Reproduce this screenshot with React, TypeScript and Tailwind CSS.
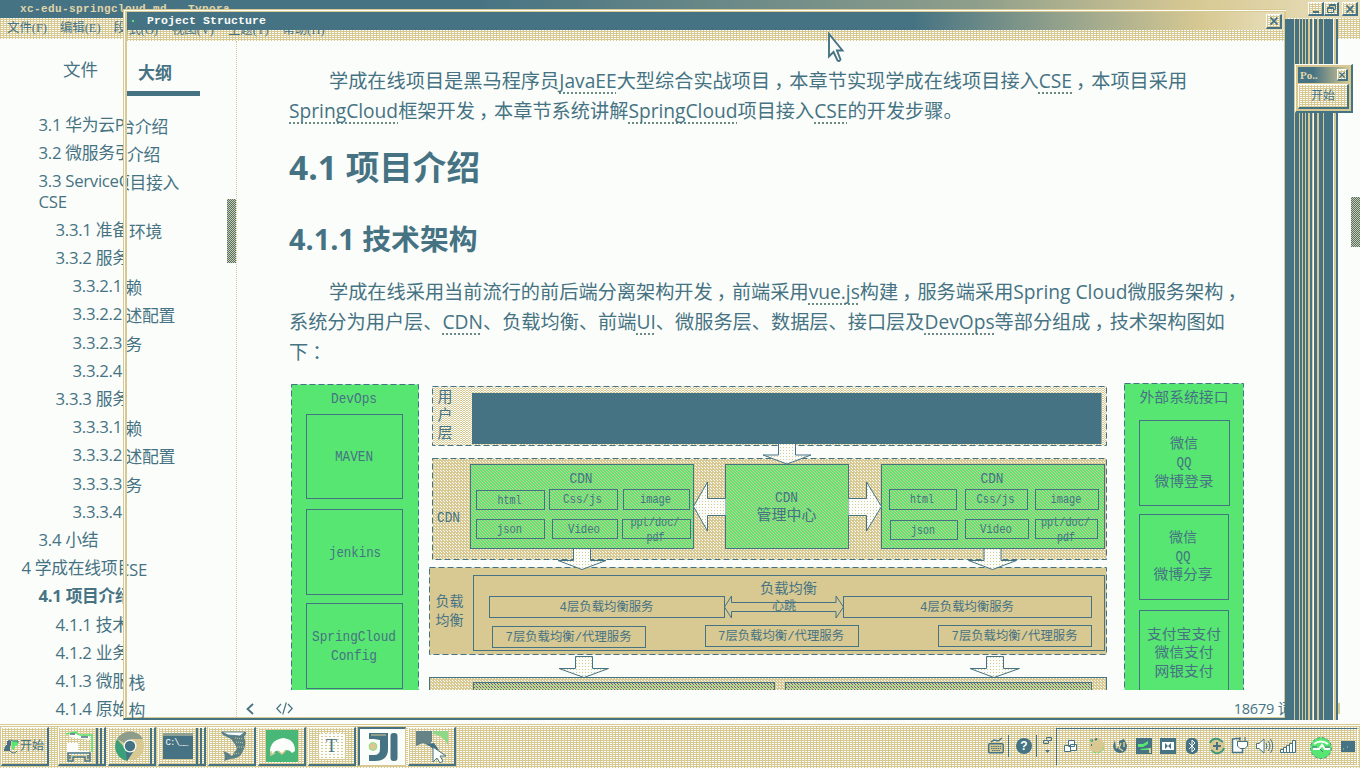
import React from "react";

const TEAL = "#467383";
const TAN = "#d8c993";
const GREEN = "#57e672";

const dither =
  "bg-[#d8c993] bg-[conic-gradient(#fbfdfa_25%,transparent_0)] bg-[length:3px_2px]";
const scrollDither =
  "bg-[#d8c993] bg-[conic-gradient(#467383_25%,transparent_0_50%,#467383_0_75%,transparent_0)] bg-[length:2px_2px]";
const sans = "font-['Open_Sans','Noto_Sans_CJK_SC',sans-serif]";
const serif = "font-['Liberation_Serif','Noto_Sans_CJK_SC',serif]";
const raised =
  "border-t border-l border-b-2 border-r-2 border-t-[#fbfdfa] border-l-[#fbfdfa] border-b-[#467383] border-r-[#467383]";

const outline = [
  ["pl-[38px]", "3.1 华为云PaaS平台"],
  ["pl-[38px]", "3.2 微服务引擎CSE"],
  ["pl-[38px]", "3.3 ServiceComb项"],
  ["pl-[55px]", "3.3.1 准备开发"],
  ["pl-[55px]", "3.3.2 服务提供者"],
  ["pl-[72px]", "3.3.2.1"],
  ["pl-[72px]", "3.3.2.2"],
  ["pl-[72px]", "3.3.2.3"],
  ["pl-[72px]", "3.3.2.4"],
  ["pl-[55px]", "3.3.3 服务消费者"],
  ["pl-[72px]", "3.3.3.1"],
  ["pl-[72px]", "3.3.3.2"],
  ["pl-[72px]", "3.3.3.3"],
  ["pl-[72px]", "3.3.3.4"],
  ["pl-[38px]", "3.4 小结"],
  ["pl-[21px]", "4 学成在线项目接入"],
  ["pl-[38px] font-bold", "4.1 项目介绍"],
  ["pl-[55px]", "4.1.1 技术架构"],
  ["pl-[55px]", "4.1.2 业务流程"],
  ["pl-[55px]", "4.1.3 微服务技术"],
  ["pl-[55px]", "4.1.4 原始架构"],
];

const tails = [
  ["w-[41px]", "台介绍"],
  ["w-[33px]", "介绍"],
  ["w-[52px]", "项目接入"],
  ["w-[35px]", "环境"],
  ["w-[10px]", ""],
  ["w-[15px]", "赖"],
  ["w-[48px]", "述配置"],
  ["w-[15px]", "务"],
  ["w-[10px]", ""],
  ["w-[10px]", ""],
  ["w-[15px]", "赖"],
  ["w-[48px]", "述配置"],
  ["w-[15px]", "务"],
  ["w-[10px]", ""],
  ["w-[10px]", ""],
  ["w-[20px]", "CSE"],
  ["w-[10px]", ""],
  ["w-[10px]", ""],
  ["w-[10px]", ""],
  ["w-[18px]", "栈"],
  ["w-[18px]", "构"],
];

function U({ children }: { children: React.ReactNode }) {
  return (
    <span className="underline decoration-dotted decoration-[#6c8a86] decoration-[1.5px] underline-offset-[4px] [text-decoration-skip-ink:none]">
      {children}
    </span>
  );
}

function Mark({ children }: { children: string }) {
  return <span className="pl-[4px] mr-[-4px]">{children}</span>;
}

function CloseGlyph({ size = 8 }: { size?: number }) {
  return (
    <svg width={size} height={size} viewBox="0 0 8 8" stroke={TEAL} strokeWidth="1.8">
      <path d="M.5 .5L7.5 7.5M7.5 .5L.5 7.5" />
    </svg>
  );
}

type BoxProps = { x: number; y: number; x2: number; y2: number; fill?: string; dash?: boolean };
function Box({ x, y, x2, y2, fill = "none", dash }: BoxProps) {
  return (
    <rect
      x={x}
      y={y}
      width={x2 - x}
      height={y2 - y}
      fill={fill}
      stroke={TEAL}
      strokeDasharray={dash ? "6 3" : undefined}
    />
  );
}

function T({ x, y, w, s = 14, children }: { x: number; y: number; w?: number; s?: number; children: string }) {
  return (
    <text
      x={x}
      y={y + s * 0.36}
      fontSize={s}
      textAnchor="middle"
      textLength={w}
      lengthAdjust="spacingAndGlyphs"
      fill={TEAL}
    >
      {children}
    </text>
  );
}

function Down({ x, y, h }: { x: number; y: number; h: number }) {
  return (
    <path
      d={`M${x - 8.5} ${y}V${y + h}H${x - 24}L${x} ${y + h + 9}L${x + 24} ${y + h}H${x + 8.5}V${y}`}
      fill="url(#pale)"
      stroke={TEAL}
    />
  );
}

function Diagram() {
  const cells: [number, number, number, number, string, number][] = [
    [476.5, 490.5, 544.5, 509.5, "html", 24],
    [549.5, 489.5, 617.5, 509.5, "Css/js", 39],
    [623.5, 489.5, 689.5, 509.5, "image", 31],
    [476.5, 519.5, 544.5, 538.5, "json", 25],
    [552.5, 519.5, 617.5, 538.5, "Video", 32],
    [622.5, 519.5, 690.5, 538.5, "", 0],
    [889.5, 489.5, 956.5, 509.5, "html", 24],
    [965.5, 489.5, 1027.5, 509.5, "Css/js", 38],
    [1035.5, 489.5, 1098.5, 509.5, "image", 31],
    [890.5, 520.5, 957.5, 539.5, "json", 24],
    [965.5, 519.5, 1028.5, 538.5, "Video", 32],
    [1035.5, 519.5, 1097.5, 538.5, "", 0],
  ];
  return (
    <svg
      viewBox="289 382 956 308"
      width="956"
      height="308"
      className="block shrink-0 font-['Liberation_Mono','Noto_Sans_CJK_SC',monospace]"
    >
      <defs>
        <pattern id="sand" width="3" height="3" patternUnits="userSpaceOnUse">
          <rect width="3" height="3" fill={TAN} />
          <rect width="1" height="1" fill="#fbfdfa" />
          <rect x="2" y="2" width="1" height="1" fill="#fbfdfa" />
        </pattern>
        <pattern id="check" width="3" height="2" patternUnits="userSpaceOnUse">
          <rect width="3" height="2" fill={TAN} />
          <rect width="1" height="1" fill="#fbfdfa" />
          <rect x="1" y="1" width="2" height="1" fill="#fbfdfa" />
        </pattern>
        <pattern id="leaf" width="3" height="3" patternUnits="userSpaceOnUse">
          <rect width="3" height="3" fill={GREEN} />
          <rect width="1" height="1" fill={TAN} />
          <rect x="1" y="1" width="1" height="1" fill={TAN} />
          <rect x="2" y="2" width="1" height="1" fill={TAN} />
        </pattern>
        <pattern id="pale" width="3" height="3" patternUnits="userSpaceOnUse">
          <rect width="3" height="3" fill="#fbfdfa" />
          <rect width="1" height="1" fill={TAN} />
        </pattern>
        <pattern id="moss" width="3" height="3" patternUnits="userSpaceOnUse">
          <rect width="3" height="3" fill={TAN} />
          <rect width="1" height="1" fill={TEAL} />
          <rect x="1" y="1" width="1" height="1" fill={GREEN} />
          <rect x="2" y="2" width="1" height="1" fill={TEAL} />
        </pattern>
      </defs>

      <Box x={291.5} y={384.5} x2={418.5} y2={700} fill={GREEN} dash />
      <T x={354} y={398} w={46}>DevOps</T>
      <Box x={306.5} y={414.5} x2={402.5} y2={498.5} />
      <T x={354} y={456} w={38}>MAVEN</T>
      <Box x={306.5} y={509.5} x2={402.5} y2={594.5} />
      <T x={355} y={552} w={52}>jenkins</T>
      <Box x={306.5} y={603.5} x2={402.5} y2={688.5} />
      <T x={354} y={636} w={84}>SpringCloud</T>
      <T x={354} y={655} w={46}>Config</T>

      <Box x={432.5} y={386.5} x2={1106.5} y2={445.5} fill="url(#check)" dash />
      <rect x="472" y="393" width="629.5" height="51" fill={TEAL} />
      <T x={445} y={397} s={15}>用</T>
      <T x={445} y={415} s={15}>户</T>
      <T x={445} y={433} s={15}>层</T>

      <Box x={432.5} y={458.5} x2={1106.5} y2={559.5} fill="url(#sand)" dash />
      <T x={448.5} y={517} w={23}>CDN</T>
      <Box x={470.5} y={464.5} x2={693.5} y2={548.5} fill="url(#leaf)" />
      <Box x={725.5} y={464.5} x2={848.5} y2={548.5} fill="url(#leaf)" />
      <Box x={881.5} y={464.5} x2={1104.5} y2={548.5} fill="url(#leaf)" />
      <T x={581} y={478} w={23}>CDN</T>
      <T x={992} y={478} w={23}>CDN</T>
      <T x={786.5} y={497} w={23}>CDN</T>
      <T x={786.5} y={515} w={60} s={15}>管理中心</T>
      {cells.map(([x, y, x2, y2, label, w], i) => (
        <g key={i}>
          <Box x={x} y={y} x2={x2} y2={y2} />
          {label && <T x={(x + x2) / 2 - 1} y={(y + y2) / 2 - 1} w={w} s={12.5}>{label}</T>}
        </g>
      ))}
      <T x={655} y={521} w={49} s={12.5}>ppt/doc/</T>
      <T x={655.5} y={536} w={18} s={12.5}>pdf</T>
      <T x={1065.5} y={521} w={49} s={12.5}>ppt/doc/</T>
      <T x={1066} y={536} w={18} s={12.5}>pdf</T>
      <Down x={787} y={444} h={11} />
      <path d="M725.5 498.5H707.5V482L693.5 506.5L707.5 531V515.5H725.5" fill="url(#pale)" stroke={TEAL} />
      <path d="M848.5 498.5H866.5V482L881.5 506.5L866.5 531V515.5H848.5" fill="url(#pale)" stroke={TEAL} />

      <Box x={429.5} y={567.5} x2={1106.5} y2={654.5} fill={TAN} dash />
      <Down x={582} y={549} h={11.5} />
      <Down x={992.5} y={549} h={11.5} />
      <Box x={473.5} y={575.5} x2={1104.5} y2={650.5} />
      <T x={449.5} y={601} w={28}>负载</T>
      <T x={449.5} y={620} w={28}>均衡</T>
      <T x={788.5} y={588} w={57}>负载均衡</T>
      <Box x={489.5} y={596.5} x2={724.5} y2={617.5} />
      <Box x={843.5} y={596.5} x2={1091.5} y2={617.5} />
      <T x={606.5} y={606} w={94} s={12.5}>4层负载均衡服务</T>
      <T x={967} y={606} w={94} s={12.5}>4层负载均衡服务</T>
      <path
        d="M724.5 607L731.5 596V602.5H836V596L843.5 607L836 618V611.5H731.5V618Z"
        fill={TAN}
        stroke={TEAL}
      />
      <T x={784} y={606} w={24} s={12}>心跳</T>
      <Box x={492.5} y={626.5} x2={645.5} y2={647.5} />
      <T x={568.5} y={636} w={126} s={12.5}>7层负载均衡/代理服务</T>
      <Box x={705.5} y={625.5} x2={858.5} y2={646.5} />
      <T x={781} y={635} w={126} s={12.5}>7层负载均衡/代理服务</T>
      <Box x={938.5} y={625.5} x2={1091.5} y2={646.5} />
      <T x={1014.5} y={635} w={126} s={12.5}>7层负载均衡/代理服务</T>
      <path d="M575.5 656.5V668.5H559L584 677.5L608.5 668.5H592.5V656.5Z" fill="url(#pale)" stroke={TEAL} />
      <path d="M986.5 656.5V668.5H970L994 677.5L1019.5 668.5H1003.5V656.5Z" fill="url(#pale)" stroke={TEAL} />

      <Box x={429.5} y={677.5} x2={1106.5} y2={700} fill="url(#sand)" />
      <Box x={473.5} y={682.5} x2={774.5} y2={700} fill="url(#moss)" />
      <Box x={785.5} y={682.5} x2={1091.5} y2={700} fill="url(#moss)" />

      <Box x={1124.5} y={383.5} x2={1243.5} y2={700} fill={GREEN} dash />
      <T x={1184} y={397} w={89}>外部系统接口</T>
      <Box x={1139.5} y={420.5} x2={1229.5} y2={505.5} />
      <T x={1184} y={443} w={28}>微信</T>
      <T x={1184} y={462} w={15}>QQ</T>
      <T x={1184} y={481} w={59}>微博登录</T>
      <Box x={1139.5} y={514.5} x2={1228.5} y2={599.5} />
      <T x={1183} y={537} w={28}>微信</T>
      <T x={1183} y={556} w={15}>QQ</T>
      <T x={1183} y={574} w={59}>微博分享</T>
      <Box x={1139.5} y={610.5} x2={1228.5} y2={700} />
      <T x={1184} y={634} w={74}>支付宝支付</T>
      <T x={1184} y={652} w={59}>微信支付</T>
      <T x={1184} y={671} w={59}>网银支付</T>
    </svg>
  );
}

function BackWindow() {
  return (
    <section className="absolute inset-0 bg-[#fbfdfa]">
      <header className="h-[18px] flex items-center pl-[20px] pt-px overflow-hidden whitespace-nowrap bg-[linear-gradient(90deg,#467383_35%,#8f9f8b_72%,#d8c993_88%,#e8dfbd)]">
        <span className="text-[11px] font-bold text-[#e0d5aa] font-['Liberation_Mono',monospace] tracking-[0.4px]">
          xc-edu-springcloud.md - Typora
        </span>
      </header>
      <nav className={`${dither} ${serif} h-[21px] flex items-center gap-[13px] pl-[7px] text-[12.4px]`}>
        <span>文件(F)</span>
        <span>编辑(E)</span>
        <span>段落(P)</span>
      </nav>
      <aside className={`${sans} w-[124px] overflow-hidden whitespace-nowrap`}>
        <div className="h-[75.5px] pt-[17px] pl-[63px] text-[17.5px] leading-[26px]">文件</div>
        <ul className="text-[16.8px] leading-[20.6px] tracking-[-0.3px] pl-[0.5px]">
          {outline.map(([cls, label], i) => (
            <li key={i} className={`${cls} pb-[7.62px]`}>
              {label}
              {i === 2 && <div>CSE</div>}
            </li>
          ))}
        </ul>
      </aside>
    </section>
  );
}

function Dialog() {
  return (
    <section className="absolute left-[123px] top-[9px] w-[1163px] h-[711px] flex flex-col bg-[#fbfdfa] border-t border-l border-b-2 border-[#d8c993] border-b-[#467383] overflow-hidden">
      <div className="flex-1 flex flex-col min-h-0 border-t border-l-2 border-r-2 border-l-[#d8c993] border-t-[#d8c993] border-r-[#d8c993] border-b border-b-[#d8c993] ml-px mt-px">
        <header className="h-[18px] shrink-0 flex items-center bg-[linear-gradient(90deg,#467383_68%,#8f9f8b_80%,#d8c993_93%,#e8dfbd)]">
          <span className="w-[2px] h-[2px] ml-[5px] bg-[#57e672]" />
          <span className="ml-[13px] text-[11.5px] font-bold tracking-[0.1px] text-[#fbfdfa] font-['Liberation_Mono',monospace]">
            Project Structure
          </span>
          <span className={`ml-auto mr-[2px] w-[16px] h-[15px] flex items-center justify-center ${dither} ${raised}`}>
            <CloseGlyph />
          </span>
        </header>
        <nav className={`${dither} ${serif} h-[11px] shrink-0 overflow-hidden flex items-end text-[12.4px]`}>
          <div className="flex gap-[14px] -ml-[11px] h-[18px] leading-[14px] whitespace-nowrap">
            <span>格式(O)</span>
            <span>视图(V)</span>
            <span>主题(T)</span>
            <span>帮助(H)</span>
          </div>
        </nav>
        <div className="flex-1 min-h-0 flex">
          <aside className={`${sans} w-[110px] shrink-0 border-r border-dotted border-[#d8c993] flex`}>
            <div className="w-[100px]">
              <div className="h-[55px] w-[73px] pt-[19px] pl-[11px] text-[17px] leading-[26px] font-bold border-b-[5px] border-[#467383]">
                大纲
              </div>
              <ul className="mt-[20.5px] text-[16.8px] leading-[20.6px] tracking-[-0.3px] whitespace-nowrap">
                {tails.map(([w, label], i) => (
                  <li
                    key={i}
                    className={`${w} flex justify-end overflow-hidden ${i === 2 ? "h-[49px]" : "h-[28.2px]"}`}
                  >
                    {label}
                  </li>
                ))}
              </ul>
            </div>
            <div className={`w-[9px] h-[64px] mt-[158px] ${scrollDither}`} />
          </aside>
          <main className={`${sans} flex-1 pl-[52px] flex flex-col whitespace-nowrap text-[19.2px] leading-[30px]`}>
            <p className="pt-[25px] indent-[40px] h-[85px]">
              学成在线项目是黑马程序员<U>JavaEE</U>大型综合实战项目<Mark>，</Mark>本章节实现学成在线项目接入<U>CSE</U><Mark>，</Mark>本项目采用
              <br />
              <span className="inline-block indent-0">
                <U>SpringCloud</U>框架开发<Mark>，</Mark>本章节系统讲解<U>SpringCloud</U>项目接入<U>CSE</U>的开发步骤。
              </span>
            </p>
            <h1 className="h-[82px] text-[33.6px] leading-[82px] font-bold">4.1 项目介绍</h1>
            <h2 className="h-[62px] text-[28.8px] leading-[62px] font-bold">4.1.1 技术架构</h2>
            <p className="pt-[7px] indent-[40px] h-[112px]">
              学成在线采用当前流行的前后端分离架构开发<Mark>，</Mark>前端采用<U>vue.js</U>构建<Mark>，</Mark>服务端采用Spring Cloud微服务架构<Mark>，</Mark>
              <br />
              系统分为用户层、<U>CDN</U>、负载均衡、前端<U>UI</U>、微服务层、数据层、接口层及<U>DevOps</U>等部分组成<Mark>，</Mark>技术架构图如
              <br />
              下<Mark>：</Mark>
            </p>
            <Diagram />
            <footer className="h-[27px] flex items-center text-[14.5px] -ml-[43px] pt-[10px]">
              <svg width="8" height="12" viewBox="0 0 8 12" fill="none" stroke={TEAL} strokeWidth="1.8">
                <path d="M7 1L1.5 6L7 11" />
              </svg>
              <svg className="ml-[22px]" width="17" height="13" viewBox="0 0 17 13" fill="none" stroke={TEAL} strokeWidth="1.2">
                <path d="M5 2L.8 6.5L5 11M12 2L16.2 6.5L12 11M10.3 .5L6.7 12.5" />
              </svg>
              <span className="ml-auto tracking-[-0.2px] mr-[-8px]">18679 词</span>
            </footer>
          </main>
        </div>
      </div>
    </section>
  );
}

const strips = [
  "w-[9px] bg-[#467383]", "w-px bg-[#d8c993]", "w-[4px] bg-[#467383]", "w-px bg-[#d8c993]",
  "w-[2px] bg-[#467383]", "w-px bg-[#d8c993]", "w-[2px] bg-[#467383]", "w-px bg-[#d8c993]",
  "w-[2px] bg-[#467383]", "w-[2px] bg-[#d8c993]", "w-[2px] bg-[#467383]", "w-px bg-[#d8c993]",
  "w-px bg-[#fbfdfa]", "w-[3px] bg-[#467383]", "w-[2px] bg-[#d8c993]", "w-[4px] bg-[#467383]",
  "w-px bg-[#d8c993]", "w-[9px] bg-[#467383]", "w-px bg-[#fbfdfa]", "w-[2px] bg-[#d8c993]",
  "w-[2px] bg-[#467383]",
];

function Desktop() {
  return (
    <div className="relative h-[724px] overflow-hidden">
      <BackWindow />
      <div className="absolute left-[1285px] top-[684px] w-[55px] h-[40px] flex items-center justify-end pt-[8px]">
        <div className="w-[2px] h-[11px] bg-[#d8c993]" />
      </div>
      <Dialog />
      <div className="absolute left-[1285px] top-[19px] h-[701px] flex">
        {strips.map((c, i) => (
          <div key={i} className={c} />
        ))}
      </div>
      <div className="absolute left-[1308px] top-[2px] flex">
        <span className={`w-[16px] h-[14px] flex items-end justify-center pb-px ${dither} ${raised}`}>
          <span className="w-[6px] h-[2px] bg-[#467383]" />
        </span>
        <span className={`w-[15px] h-[14px] flex items-center justify-center ${dither} ${raised}`}>
          <svg width="9" height="9" viewBox="0 0 9 9" fill="none" stroke={TEAL}>
            <path d="M2.5 3V.5H8.5V5.5H6.5M2.5 1.5H8.5M.5 3.5H6.5V8.5H.5ZM.5 4.5H6.5" />
          </svg>
        </span>
        <span className={`ml-[3px] w-[16px] h-[14px] flex items-center justify-center ${dither} ${raised}`}>
          <CloseGlyph />
        </span>
      </div>
      <div className={`absolute left-[1351px] top-[197px] w-[9px] h-[50px] ${scrollDither}`} />
      <section className="absolute left-[1295px] top-[64px] w-[58px] h-[49px] p-[2px] flex flex-col bg-[#d8c993] border-t border-l border-t-[#fbfdfa] border-l-[#fbfdfa] border-r-2 border-b-2 border-r-[#467383] border-b-[#467383]">
        <header className="h-[16px] flex items-center pl-[2px] pr-px bg-[linear-gradient(90deg,#467383_30%,#d8c993)]">
          <span className="text-[11px] font-bold text-[#e0d5aa] font-['Liberation_Serif',serif]">Po..</span>
          <span className={`ml-auto w-[11px] h-[12px] flex items-center justify-center ${dither} ${raised}`}>
            <CloseGlyph size={6} />
          </span>
        </header>
        <button className={`mt-px flex-1 text-[12px] leading-none ${dither} ${raised} ${sans}`}>
          开始
        </button>
      </section>
      <svg className="absolute left-[827px] top-[32px]" width="18" height="31" viewBox="0 0 18 31">
        <path
          d="M2 2V24.500L6.500 20L10.500 28.500Q12.500 30 13.500 27.500L10 18.500H15.500Z"
          fill="#fbfdfa"
          stroke={TEAL}
          strokeWidth="1.900"
        />
      </svg>
    </div>
  );
}

function TaskButton({ children, stack = 0 }: { children: React.ReactNode; stack?: number }) {
  return (
    <div className={`w-[48px] h-[39px] flex ${dither} ${raised}`}>
      <div className="flex-1 flex items-center justify-center">{children}</div>
      {stack > 0 && <div className="w-[4px] border-l-2 border-[#467383]" />}
      {stack > 1 && <div className="w-[4px] border-l-2 border-[#467383]" />}
    </div>
  );
}

function Taskbar() {
  return (
    <footer className={`h-[44px] flex border-t border-[#d8c993] ${dither}`}>
      <div className="w-full flex pt-px border-t border-[#fbfdfa]">
        <button className={`ml-px w-[48px] h-[39px] flex items-center pl-[2px] text-[12px] ${dither} ${raised} ${sans}`}>
          <svg width="16" height="18" viewBox="0 0 16 18">
            <path d="M0 13Q1 8 3 8V4H7V8L6 10V14H0Z" fill={TEAL} />
            <path d="M8 4L14 3V8L11 9L10 13L8 12Z" fill={GREEN} />
            <path d="M6 14Q10 18 13 14M4 4Q7 2 9 4H14V6" fill="none" stroke={TEAL} />
          </svg>
          <span>开始</span>
        </button>
        <div className="ml-[9px] flex gap-[2px]">
          <TaskButton stack={2}>
            <svg width="34" height="34" viewBox="0 0 34 34">
              <path d="M5 5L15 3L18 6H31V23" fill="none" stroke={GREEN} strokeWidth="1.5" />
              <path d="M9 4L20 7L29 8V11L8 8Z" fill="#fbfdfa" />
              <path d="M6 14H17V22H28V25H6Z" fill="#fbfdfa" />
              <path d="M9 5H14M20 8H27" stroke={TEAL} strokeWidth="1.500" />
              <path d="M7 24H29V32H24V28H12V32H7ZM9 26V30M27 26V30" fill="none" stroke={TEAL} strokeWidth="1.500" />
            </svg>
          </TaskButton>
          <TaskButton stack={1}>
            <svg width="32" height="32" viewBox="0 0 32 32">
              <circle cx="16" cy="16" r="14" fill={TAN} />
              <path d="M16 16L3 9A15 15 0 0 1 29 9H17Z" fill="#8e9d8b" />
              <path d="M3 9A15 15 0 0 0 13 31L19 22L10 17Z" fill="#3b9f7a" />
              <path d="M13 31L19 22H12Z" fill={TEAL} />
              <circle cx="16" cy="16" r="6.500" fill="#fbfdfa" />
              <circle cx="16" cy="16" r="5.200" fill={TEAL} />
            </svg>
          </TaskButton>
          <TaskButton stack={2}>
            <div className="w-[30px] h-[26px] bg-[#467383] border-t-[3px] border-[#8da091] text-[#fbfdfa] text-[9px] leading-[14px] pl-[3px] font-['Liberation_Mono',monospace] tracking-[-1px]">
              C:\__
            </div>
          </TaskButton>
          <TaskButton>
            <svg width="32" height="32" viewBox="0 0 32 32">
              <path d="M5 2L16 3L29 2Q32 2 28 7Q31 14 27 21Q24 29 14 29L8 31Q10 26 7 21L12 23L16 26Q18 22 21 19Q19 13 15 9L7 5Z" fill="#5a7f84" />
              <path d="M6 2H29L24 6L12 5Z" fill="#fbfdfa" stroke={TEAL} strokeWidth=".8" />
              <path d="M19 8L27 9M20 12L28 13M21 17L28 17M18 24L24 23" stroke="#d8c993" strokeDasharray="1 1" />
            </svg>
          </TaskButton>
          <TaskButton>
            <svg width="32" height="32" viewBox="0 0 32 32">
              <rect width="32" height="32" fill="#48b778" />
              <path d="M4 22Q4 10 17 8Q29 9 29 21L26 23Q24 20 20 20L16 24L13 21Q9 20 7 24Z" fill="#fbfdfa" />
              <path d="M5 21V25L9 23M12 21L16 24L20 20" fill="none" stroke={TAN} strokeWidth="1.500" />
            </svg>
          </TaskButton>
          <TaskButton>
            <div className="w-[26px] h-[26px] bg-[#fbfdfa] bg-[conic-gradient(#d8c993_25%,transparent_0)] bg-[length:4px_3px] rounded-[3px] flex items-center justify-center text-[18px] leading-none font-['Liberation_Serif',serif]">
              T
            </div>
          </TaskButton>
          <div className="w-[48px] h-[39px] flex items-center justify-center bg-[#fbfdfa] border-t-2 border-l-2 border-b border-r border-t-[#467383] border-l-[#467383] border-b-[#d8c993] border-r-[#d8c993]">
            <svg width="30" height="30" viewBox="0 0 30 30">
              <path d="M1 1H20V17Q20 29 7 29H1V23H6Q12 23 12 17V8L6 7H1Z" fill={TEAL} />
              <path d="M3 3H18" stroke={TAN} />
              <rect x="22.500" y="1" width="7" height="28" rx="3" fill={TEAL} />
              <circle cx="5" cy="14.500" r="4" fill={TAN} stroke={GREEN} strokeWidth=".6" />
            </svg>
          </div>
          <TaskButton>
            <svg width="34" height="34" viewBox="0 0 34 34">
              <path d="M1 2H17V12L14 17L8 14L1 17Z" fill="#668487" />
              <path d="M18 2H33V16Q28 6 18 5Z" fill="#8fd888" />
              <path d="M12 15L19 14L24 21L18 20Z" fill={TEAL} />
              <path d="M18 18V33L22 29L25 34L28 32L25 27H31Z" fill="#fbfdfa" stroke={TEAL} />
            </svg>
          </TaskButton>
        </div>
        <div className="ml-auto flex items-center pb-[3px]">
          <svg width="16" height="18" viewBox="0 0 16 18" fill="none" stroke={TEAL}>
            <path d="M3 5L6 3L10 4L14 1" strokeWidth="1.500" />
            <rect x=".7" y="6.700" width="14.500" height="9" rx="1" fill={TAN} strokeWidth="1.400" />
            <path d="M3 9.500H13M3 11.500H13M4 13.500H12" strokeDasharray="1.500 .7" />
          </svg>
          <div className="ml-[4px] w-px h-[22px] bg-[#467383]" />
          <div className="ml-[7px] w-[16px] h-[16px] rounded-full bg-[#467383] text-[#fbfdfa] font-bold text-[12px] leading-[16px] text-center font-['Liberation_Sans',sans-serif]">
            ?
          </div>
          <div className="ml-[4px] w-px h-[22px] bg-[#467383]" />
          <svg className="ml-[6px]" width="9" height="20" viewBox="0 0 9 20" fill="none" stroke={TEAL}>
            <path d="M3.500 3.500V1.500H8.500V4.500H6M.5 4.500H5.500V7.500H.5Z" />
            <path d="M2 14H7L4.500 17Z" fill={TEAL} stroke="none" />
          </svg>
        </div>
        <div className="ml-[4px] mr-[2px] mt-px w-[302px] h-[38px] flex items-center pl-[7px] border-t border-l border-t-[#467383] border-l-[#467383] border-b border-b-[#fbfdfa] border-r border-r-[#fbfdfa]">
          <svg className="shrink-0" width="293" height="24" viewBox="0 0 293 24" fill="none" stroke={TEAL}>
            <path d="M4.500 5.500H10.500V11.500H4.500ZM.5 10.500H6.500V16.500H.5ZM6.500 9.500H12.500V15.500H6.500Z" fill="#fbfdfa" />
            <circle cx="33" cy="11" r="7.500" fill={TAN} stroke="none" />
            <path d="M26 5.500H29M33 3.500L31 5M27 10H28" strokeWidth="2" />
            <path d="M29 17Q37 20 40 12M26 5L30 7" stroke={GREEN} strokeDasharray="3 2" />
            <path d="M51 5L49 11Q50 18 56 18Q63 18 63 10L60 4L55 6V11L52 14Z" fill={TEAL} stroke="none" />
            <path d="M57 8L55 13L59 16M60 7V12" stroke={TAN} strokeWidth="1.500" />
            <g stroke="none">
              <rect x="72" y="3" width="16" height="16" fill={TEAL} />
              <path d="M74 9H79L84 6V9L79 12H74ZM76 14L85 13V15H77Z" fill={GREEN} />
              <path d="M85 13H87V18H85Z" fill={TAN} />
              <rect x="96" y="3" width="16" height="16" fill={TEAL} />
              <path d="M98 7H110V15H98Z" fill="#fbfdfa" />
              <path d="M101 8L104 11L101 14ZM107 8L104 11L107 14Z" fill={TEAL} />
              <rect x="122" y="3" width="12" height="16" rx="5" fill={TEAL} />
            </g>
            <path d="M125 8L131 14L128 17V5L131 8L125 14" stroke="#fbfdfa" />
            <circle cx="153" cy="11" r="7.500" fill={TAN} stroke="none" />
            <path d="M153 7V15M149 11H157" strokeWidth="2" />
            <path d="M146 8Q148 3 154 4L159 7M160 13Q158 19 151 18L147 15" stroke="#3f987a" strokeWidth="2" />
            <path d="M171 4H168.500V17.500H178.500V14M171 3.500H175.500V5" fill="#fbfdfa" strokeWidth="1.500" />
            <path d="M173.500 6.500H183.500V11L181 13.500H176L173.500 11ZM176 6V2M181 6V2M178.500 13V18" fill="#fbfdfa" />
            <path d="M192.500 8.500H195L200 4V18L195 13.500H192.500Z" fill="#fbfdfa" />
            <path d="M202 8Q204 11 202 14M204 6Q208 11 204 16M206.500 4Q211 11 206.500 18" />
            <path d="M216.500 17.500V14.500H219.500V17.500ZM219.500 17.500V12.500H222.500V17.500ZM222.500 17.500V10.500H225.500V17.500ZM225.500 17.500V8.500H228.500V17.500ZM228.500 17.500V5.500H231.500V17.500Z" fill="#fbfdfa" />
            <circle cx="257" cy="13" r="10.500" fill={GREEN} stroke="#3f987a" strokeDasharray="3 2" />
            <path d="M250 9Q257 4 264 9M249 14H255L258 10L261 14H266" stroke="#fbfdfa" strokeWidth="2" />
            <path d="M248 12H253M261 12H266M256 14L259 17" stroke={TEAL} />
            <path d="M277 6H291V17H277Z" fill={TEAL} stroke="none" />
            <path d="M279 14H280M283 12H284" stroke={TAN} />
          </svg>
        </div>
      </div>
    </footer>
  );
}

export default function App() {
  return (
    <div className="w-[1360px] h-[768px] overflow-hidden flex flex-col bg-[#fbfdfa] text-[#467383]">
      <Desktop />
      <Taskbar />
    </div>
  );
}
